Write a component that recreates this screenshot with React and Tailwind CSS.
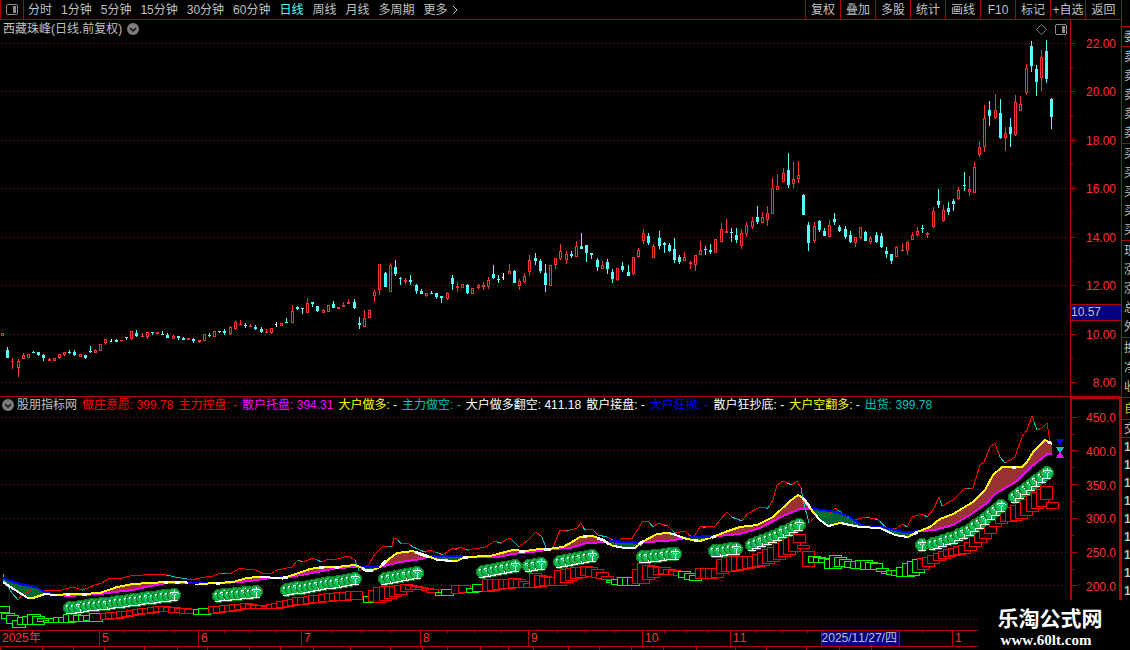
import { Fragment } from "react";

const PERIODS = [
  "分时",
  "1分钟",
  "5分钟",
  "15分钟",
  "30分钟",
  "60分钟",
  "日线",
  "周线",
  "月线",
  "多周期",
  "更多",
];

const TOOLS = ["复权", "叠加", "多股", "统计", "画线", "F10", "标记", "+自选", "返回"];

const PRICE_TICKS = ["22.00", "20.00", "18.00", "16.00", "14.00", "12.00", "10.00", "8.00"];
const PRICE_GRID = [43, 91, 140, 188, 237, 285, 334, 382];

const IND_TICKS = ["450.0", "400.0", "350.0", "300.0", "250.0", "200.0"];
const IND_GRID = [417, 450, 484, 518, 552, 585, 619];

const LEGEND = [
  { text: "做庄意愿: 399.78", color: "text-[#ff0000]" },
  { text: "主力控盘: -", color: "text-[#ff0000]" },
  { text: "散户托盘: 394.31", color: "text-[#ff00ff]" },
  { text: "大户做多: -", color: "text-[#ffff00]" },
  { text: "主力做空: -", color: "text-[#00c0c0]" },
  { text: "大户做多翻空: 411.18", color: "text-white" },
  { text: "散户接盘: -", color: "text-white" },
  { text: "大户狂抛: -", color: "text-[#0000ff]" },
  { text: "散户狂抄底: -", color: "text-white" },
  { text: "大户空翻多: -", color: "text-[#ffff00]" },
  { text: "出货: 399.78", color: "text-[#00c0c0]" },
];

const MONTHS = [
  { label: "2025年", span: 99 },
  { label: "5", span: 99 },
  { label: "6", span: 103 },
  { label: "7", span: 119 },
  { label: "8", span: 108 },
  { label: "9", span: 114 },
  { label: "10", span: 88 },
  { label: "11", span: 222 },
  { label: "1", span: 169 },
];

const WEEK_TICKS = [
  124, 149, 174, 224, 249, 275, 331, 361, 390, 447, 474, 501, 557, 585, 614, 664, 686, 708, 756, 782,
  807, 922,
];
const FOOT_TICKS = [
  0, 42, 73, 104, 144, 177, 207, 249, 280, 313, 350, 390, 422, 447, 480, 508, 533, 568, 599, 631, 663,
  696, 735, 766, 806, 839, 871,
];

// x, high, body top, body bottom, low, kind (r = up, c = down, w = flat)
const CANDLES = [
  [2, 333, 333, 336, 336, "r"], [7, 347, 350, 358, 358, "c"], [12, 358, 361, 362, 369, "r"],
  [18, 359, 361, 368, 377, "r"], [23, 353, 355, 359, 359, "r"], [28, 354, 354, 358, 358, "r"],
  [33, 351, 352, 353, 353, "c"], [38, 352, 352, 355, 356, "c"], [43, 354, 355, 358, 361, "c"],
  [49, 358, 359, 361, 361, "r"], [54, 358, 358, 361, 361, "r"], [59, 354, 354, 358, 359, "r"],
  [64, 352, 352, 355, 356, "r"], [69, 350, 352, 353, 354, "c"], [74, 350, 352, 355, 356, "c"],
  [80, 354, 354, 357, 357, "r"], [85, 355, 355, 358, 359, "c"], [90, 346, 351, 352, 353, "c"],
  [95, 349, 350, 353, 353, "r"], [100, 344, 344, 351, 351, "r"], [105, 339, 339, 343, 345, "r"],
  [111, 339, 341, 342, 342, "w"], [116, 339, 340, 342, 342, "c"], [121, 340, 340, 341, 342, "r"],
  [126, 337, 337, 338, 340, "c"], [131, 331, 331, 339, 340, "r"], [136, 330, 333, 336, 337, "c"],
  [142, 333, 336, 337, 337, "r"], [147, 332, 332, 337, 339, "r"], [152, 332, 332, 333, 335, "c"],
  [157, 332, 332, 334, 334, "r"], [162, 331, 334, 335, 335, "c"], [167, 333, 335, 338, 338, "c"],
  [173, 335, 336, 339, 339, "r"], [178, 336, 336, 338, 340, "c"], [183, 337, 338, 340, 340, "c"],
  [188, 338, 338, 340, 340, "r"], [193, 338, 339, 341, 343, "c"], [199, 340, 340, 342, 343, "r"],
  [204, 334, 334, 341, 341, "r"], [209, 333, 335, 336, 337, "c"], [214, 331, 331, 337, 337, "r"],
  [219, 331, 331, 332, 333, "c"], [224, 329, 331, 333, 335, "c"], [230, 326, 327, 334, 335, "r"],
  [235, 321, 322, 329, 330, "r"], [240, 320, 324, 325, 325, "r"], [245, 323, 325, 326, 328, "c"],
  [250, 324, 326, 327, 327, "r"], [255, 325, 327, 329, 330, "c"], [261, 327, 329, 332, 333, "c"],
  [266, 329, 332, 333, 333, "r"], [271, 328, 328, 333, 334, "r"], [276, 322, 324, 325, 327, "w"],
  [281, 323, 323, 326, 326, "r"], [286, 318, 322, 323, 323, "c"], [292, 305, 311, 323, 323, "r"],
  [297, 306, 307, 309, 310, "c"], [302, 308, 308, 309, 314, "c"], [307, 298, 303, 313, 313, "r"],
  [312, 302, 302, 304, 307, "c"], [317, 306, 306, 311, 312, "c"], [323, 309, 310, 313, 313, "r"],
  [328, 305, 305, 312, 312, "r"], [333, 301, 304, 308, 308, "c"], [338, 307, 307, 309, 309, "r"],
  [343, 302, 305, 307, 307, "r"], [348, 299, 302, 304, 304, "r"], [354, 299, 302, 308, 309, "c"],
  [359, 317, 323, 325, 329, "c"], [364, 310, 318, 327, 327, "r"], [369, 310, 310, 318, 318, "r"],
  [374, 290, 292, 296, 302, "r"], [379, 264, 264, 290, 295, "r"], [385, 272, 273, 287, 287, "c"],
  [390, 263, 265, 292, 292, "r"], [395, 260, 267, 274, 276, "c"], [400, 277, 278, 279, 285, "c"],
  [405, 278, 280, 282, 284, "r"], [410, 275, 280, 282, 285, "c"], [416, 284, 285, 291, 294, "c"],
  [421, 289, 291, 294, 294, "c"], [426, 293, 293, 296, 297, "r"], [431, 291, 293, 294, 294, "c"],
  [436, 293, 293, 297, 299, "c"], [441, 296, 296, 298, 303, "c"], [447, 292, 293, 299, 300, "r"],
  [452, 275, 278, 284, 290, "c"], [457, 282, 286, 288, 292, "r"], [462, 284, 284, 288, 288, "r"],
  [467, 284, 285, 293, 294, "c"], [472, 288, 288, 294, 294, "r"], [478, 284, 285, 288, 289, "r"],
  [483, 282, 285, 287, 290, "r"], [488, 277, 280, 287, 289, "r"], [493, 265, 274, 278, 279, "c"],
  [498, 275, 279, 280, 283, "c"], [503, 273, 277, 278, 280, "w"], [509, 264, 271, 274, 274, "r"],
  [514, 270, 271, 283, 283, "c"], [519, 279, 281, 286, 290, "r"], [524, 273, 276, 282, 283, "r"],
  [529, 255, 260, 272, 276, "r"], [535, 253, 258, 261, 265, "c"], [540, 259, 261, 271, 273, "c"],
  [545, 264, 273, 285, 292, "c"], [550, 265, 265, 286, 286, "r"], [555, 258, 258, 265, 269, "r"],
  [560, 244, 251, 259, 260, "r"], [566, 251, 254, 260, 264, "r"], [571, 251, 254, 256, 258, "c"],
  [576, 241, 246, 257, 257, "r"], [581, 233, 246, 249, 249, "c"], [586, 245, 245, 253, 262, "c"],
  [591, 253, 253, 255, 259, "c"], [597, 258, 260, 267, 271, "c"], [602, 261, 265, 269, 269, "r"],
  [607, 259, 262, 269, 274, "c"], [612, 269, 272, 279, 283, "c"], [617, 268, 268, 280, 281, "r"],
  [622, 262, 266, 270, 272, "c"], [628, 265, 272, 276, 276, "c"], [633, 257, 257, 274, 275, "r"],
  [638, 248, 250, 257, 258, "r"], [643, 229, 233, 241, 244, "r"], [648, 233, 236, 243, 245, "c"],
  [653, 244, 246, 258, 258, "r"], [659, 231, 238, 246, 249, "c"], [664, 242, 243, 245, 253, "c"],
  [669, 243, 245, 251, 252, "c"], [674, 238, 249, 260, 263, "c"], [679, 255, 257, 262, 264, "c"],
  [684, 252, 257, 261, 261, "r"], [690, 261, 262, 264, 269, "r"], [695, 255, 255, 265, 271, "r"],
  [700, 241, 250, 255, 255, "r"], [705, 246, 249, 250, 255, "c"], [710, 244, 250, 252, 254, "c"],
  [715, 239, 239, 253, 253, "r"], [721, 223, 229, 242, 242, "r"], [726, 219, 231, 233, 233, "r"],
  [731, 228, 232, 233, 242, "c"], [736, 228, 235, 240, 243, "c"], [741, 229, 233, 246, 249, "r"],
  [746, 222, 225, 234, 237, "r"], [752, 217, 221, 227, 229, "r"], [757, 206, 217, 222, 224, "c"],
  [762, 212, 217, 223, 223, "r"], [767, 206, 213, 220, 226, "r"], [772, 178, 188, 214, 214, "r"],
  [777, 174, 186, 190, 190, "r"], [783, 168, 173, 182, 182, "r"], [788, 153, 170, 185, 188, "c"],
  [793, 162, 179, 184, 189, "r"], [798, 161, 175, 179, 183, "r"], [803, 194, 195, 215, 215, "c"],
  [808, 222, 225, 243, 251, "c"], [814, 222, 226, 241, 243, "r"], [819, 220, 221, 230, 232, "c"],
  [824, 228, 231, 236, 236, "c"], [829, 220, 225, 237, 237, "r"], [834, 213, 219, 222, 225, "c"],
  [839, 225, 227, 231, 232, "c"], [845, 226, 229, 237, 239, "c"], [850, 231, 235, 242, 243, "c"],
  [855, 237, 237, 243, 247, "r"], [860, 227, 227, 238, 239, "r"], [865, 231, 232, 241, 241, "c"],
  [870, 236, 238, 242, 244, "r"], [876, 232, 235, 242, 243, "c"], [881, 233, 236, 247, 248, "c"],
  [886, 247, 251, 254, 258, "c"], [891, 254, 254, 261, 264, "c"], [896, 246, 247, 257, 257, "r"],
  [902, 243, 250, 251, 251, "r"], [907, 241, 242, 251, 255, "r"], [912, 232, 235, 240, 240, "r"],
  [917, 227, 231, 235, 236, "r"], [922, 225, 228, 229, 233, "c"], [927, 232, 233, 235, 238, "r"],
  [933, 207, 211, 227, 228, "r"], [938, 189, 201, 205, 208, "c"], [943, 205, 210, 221, 222, "r"],
  [948, 202, 208, 212, 215, "c"], [953, 199, 201, 204, 211, "c"], [958, 187, 190, 199, 200, "r"],
  [964, 172, 185, 186, 191, "c"], [969, 176, 189, 192, 196, "r"], [974, 162, 167, 193, 193, "r"],
  [979, 141, 147, 155, 157, "r"], [984, 105, 118, 147, 152, "r"], [989, 101, 110, 116, 126, "c"],
  [995, 94, 110, 118, 119, "r"], [1000, 99, 113, 138, 139, "c"], [1005, 127, 133, 138, 151, "r"],
  [1010, 118, 127, 134, 147, "c"], [1015, 95, 102, 135, 136, "r"], [1020, 96, 104, 111, 111, "r"],
  [1026, 64, 68, 93, 95, "r"], [1031, 41, 46, 66, 72, "c"], [1036, 65, 69, 82, 96, "c"],
  [1041, 50, 57, 78, 91, "r"], [1046, 40, 51, 79, 83, "c"], [1051, 98, 99, 117, 129, "c"],
];

const CANDLE_COLORS = { r: "#ff3232", c: "#54ffff", w: "#ffffff" };

const WISH = [
  [3, 574], [5, 582], [12, 593], [18, 600], [22, 595], [33, 589], [50, 591], [62, 590], [72, 587],
  [83, 590], [95, 585], [102, 583], [110, 578], [120, 579], [133, 575], [143, 575], [152, 574],
  [167, 575], [175, 577], [187, 579], [193, 580], [200, 578], [213, 576], [220, 573], [230, 574],
  [240, 568], [245, 569], [253, 569], [262, 573], [272, 573], [277, 570], [292, 567], [298, 560],
  [303, 562], [313, 558], [322, 562], [328, 559], [337, 559], [348, 556], [355, 560], [359, 571],
  [367, 567], [375, 554], [383, 546], [387, 546], [392, 547], [394, 538], [396, 538], [401, 544],
  [408, 543], [413, 547], [425, 552], [430, 550], [443, 555], [452, 548], [457, 549], [460, 547],
  [467, 550], [480, 548], [485, 547], [495, 541], [500, 543], [510, 538], [519, 547], [527, 541],
  [536, 532], [542, 537], [546, 548], [552, 550], [560, 530], [567, 531], [577, 528], [581, 523],
  [585, 530], [592, 529], [598, 535], [607, 537], [617, 542], [623, 538], [632, 539], [642, 522],
  [648, 521], [653, 527], [658, 523], [668, 526], [675, 533], [685, 531], [693, 538], [700, 527],
  [715, 526], [727, 512], [732, 517], [742, 521], [747, 514], [760, 507], [768, 508], [773, 500],
  [777, 485], [783, 481], [792, 485], [797, 481], [801, 488], [803, 500], [809, 523], [817, 515],
  [827, 515], [835, 508], [847, 517], [857, 520], [863, 517], [877, 519], [887, 528], [897, 528],
  [902, 524], [907, 527], [912, 517], [922, 514], [927, 517], [933, 510], [939, 497], [942, 506],
  [953, 500], [965, 488], [973, 488], [980, 465], [984, 462], [990, 447], [995, 443], [1000, 457],
  [1005, 463], [1015, 457], [1022, 437], [1027, 430], [1032, 416], [1037, 430], [1042, 428],
  [1047, 423], [1050, 442],
];

const WISH_WEAK = [
  [3, 18], [82, 85], [166, 187], [222, 226], [298, 302], [317, 322], [355, 359], [388, 392],
  [398, 401], [410, 425], [436, 443], [455, 458], [465, 468], [497, 501], [512, 519], [540, 552],
  [566, 569], [583, 586], [594, 608], [611, 617], [650, 654], [664, 667], [672, 676], [690, 694],
  [703, 706], [731, 742], [766, 769], [787, 792], [801, 809], [838, 850], [866, 869], [875, 887],
  [904, 907], [924, 928], [940, 943], [967, 970], [999, 1006], [1034, 1037],
];

const SHORT = [
  [3, 582], [15, 590], [28, 598], [33, 598], [45, 594], [55, 595], [72, 594], [83, 594], [100, 593],
  [117, 587], [133, 584], [150, 583], [167, 582], [180, 582], [190, 583], [200, 584], [217, 583],
  [233, 582], [247, 578], [257, 577], [267, 577], [273, 578], [283, 578], [293, 575], [310, 569],
  [322, 567], [337, 567], [355, 565], [360, 567], [365, 570], [373, 570], [380, 567], [384, 563],
  [397, 553], [405, 552], [413, 551], [418, 553], [430, 557], [438, 560], [457, 561], [465, 557],
  [490, 556], [513, 550], [525, 551], [540, 549], [548, 549], [563, 547], [572, 542], [580, 537],
  [593, 536], [603, 540], [613, 546], [625, 548], [635, 548], [642, 542], [657, 534], [667, 533],
  [673, 534], [687, 539], [700, 541], [713, 537], [725, 532], [740, 527], [757, 525], [773, 517],
  [790, 501], [798, 495], [803, 498], [809, 506], [813, 512], [820, 520], [828, 526], [840, 523],
  [860, 527], [880, 528], [895, 535], [908, 537], [917, 532], [930, 527], [940, 519], [953, 514],
  [973, 502], [985, 490], [993, 475], [1002, 467], [1013, 467], [1022, 467], [1027, 462],
  [1033, 452], [1045, 440], [1051, 443],
];

const LONG = [
  [3, 578], [8, 580], [20, 584], [35, 587], [45, 592], [57, 595], [70, 596], [83, 595], [100, 594],
  [115, 592], [133, 590], [150, 586], [167, 583], [190, 583], [225, 583], [250, 581], [270, 578],
  [290, 577], [317, 572], [337, 568], [355, 567], [380, 567], [400, 562], [422, 559], [430, 556],
  [458, 556], [468, 557], [497, 557], [513, 554], [540, 551], [553, 549], [570, 548], [587, 543],
  [607, 542], [612, 541], [627, 542], [638, 543], [643, 542], [667, 541], [687, 538], [693, 537],
  [710, 536], [717, 536], [740, 534], [760, 528], [783, 516], [800, 509], [815, 509], [837, 512],
  [850, 517], [863, 526], [883, 527], [903, 532], [913, 532], [917, 531], [935, 530], [953, 525],
  [973, 513], [987, 503], [995, 494], [1017, 481], [1030, 468], [1047, 454], [1052, 454],
];

// parts of the short line that are drawn white, the rest stays yellow
const SHORT_WHITE = [
  [3, 29], [42, 57], [66, 70], [82, 87], [164, 168], [175, 180], [184, 200], [216, 220], [260, 280],
  [282, 288], [319, 324], [335, 339], [362, 373], [382, 386], [415, 429], [434, 452], [463, 468],
  [519, 525], [544, 551], [583, 587], [597, 609], [614, 635], [639, 644], [669, 686], [694, 698],
  [712, 716], [803, 810], [815, 833], [841, 907], [914, 918], [1012, 1016], [1048, 1052],
];

// left, top, right, bottom
const GREEN_BOXES = [
  [-4, 606, 9, 612], [1, 613, 14, 618], [6, 615, 18, 623], [12, 620, 25, 627], [17, 617, 29, 624],
  [22, 616, 34, 624], [27, 614, 40, 624], [32, 616, 44, 624], [37, 618, 49, 621], [43, 620, 55, 622],
  [48, 618, 60, 622], [53, 617, 65, 622], [58, 617, 70, 622], [63, 614, 75, 622], [68, 614, 80, 621],
  [73, 615, 85, 621], [78, 615, 91, 621], [83, 615, 96, 620], [89, 613, 102, 621],
];

// [left, top, bottom] keys, boxes between two keys are interpolated
const BOX_RUNS = [
  ["#ff0000", 100, 184, [[100, 613, 619], [117, 611, 617], [133, 609, 614], [145, 607, 612], [157, 606, 611], [184, 609, 613]]],
  ["#00ff00", 193, 198, [[193, 609, 614], [198, 608, 614]]],
  ["#ff0000", 208, 350, [[208, 606, 613], [240, 603, 608], [260, 606, 608], [273, 602, 608], [293, 597, 604], [317, 594, 601], [350, 591, 599]]],
  ["#00ff00", 358, 363, [[358, 602, 602], [363, 596, 602]]],
  ["#ff0000", 368, 426, [[368, 590, 601], [374, 586, 602], [388, 586, 597], [403, 584, 589], [417, 588, 589], [426, 589, 592]]],
  ["#00ff00", 435, 441, [[435, 592, 595], [441, 589, 595]]],
  ["#ff0000", 451, 458, [[451, 585, 593], [458, 585, 592]]],
  ["#00ff00", 466, 472, [[466, 588, 592], [472, 584, 591]]],
  ["#ff0000", 482, 601, [[482, 579, 591], [497, 579, 588], [510, 578, 587], [523, 583, 587], [528, 573, 587], [541, 577, 585], [549, 577, 585], [554, 570, 585], [562, 568, 581], [580, 566, 575], [592, 569, 577], [601, 576, 579]]],
  ["#00ff00", 606, 627, [[606, 580, 582], [612, 579, 584], [617, 577, 585], [627, 577, 585]]],
  ["#ff0000", 632, 673, [[632, 569, 583], [638, 562, 583], [643, 566, 578], [657, 567, 573], [673, 571, 575]]],
  ["#00ff00", 678, 689, [[678, 571, 577], [689, 575, 580]]],
  ["#ff0000", 695, 788, [[695, 568, 578], [705, 568, 578], [711, 568, 577], [717, 557, 572], [732, 556, 570], [747, 556, 567], [763, 549, 563], [777, 541, 557], [788, 534, 551]]],
  ["#ff0000", 793, 793, [[793, 534, 542]]],
  ["#ff0000", 797, 797, [[797, 545, 548]]],
  ["#ff0000", 802, 802, [[802, 551, 566]]],
  ["#00ff00", 808, 912, [[808, 556, 562], [818, 558, 562], [823, 560, 568], [828, 554, 568], [834, 557, 566], [845, 561, 567], [859, 560, 569], [870, 563, 569], [880, 571, 573], [891, 570, 575], [898, 566, 576], [904, 562, 576], [912, 559, 572]]],
  ["#ff0000", 917, 1036, [[917, 558, 569], [927, 555, 563], [940, 550, 557], [957, 545, 553], [965, 541, 549], [973, 530, 543], [983, 523, 534], [990, 512, 525], [998, 510, 521], [1009, 506, 521], [1020, 499, 515], [1030, 493, 508], [1036, 489, 506]]],
  ["#ff0000", 1040, 1040, [[1040, 486, 499]]],
  ["#ff0000", 1046, 1046, [[1046, 502, 508]]],
];

const BALL_RUNS = [
  [70, 80, [[70, 608], [80, 607]]],
  [87, 174, [[87, 606], [120, 602], [150, 598], [174, 595]]],
  [219, 256, [[219, 596], [256, 592]]],
  [287, 355, [[287, 590], [320, 585], [355, 579]]],
  [385, 417, [[385, 579], [417, 573]]],
  [483, 515, [[483, 572], [515, 566]]],
  [529, 541, [[529, 566], [541, 564]]],
  [560, 592, [[560, 562], [592, 556]]],
  [643, 675, [[643, 557], [675, 554]]],
  [715, 736, [[715, 551], [736, 549]]],
  [752, 799, [[752, 545], [775, 536], [799, 525]]],
  [922, 922, [[922, 545]]],
  [933, 1001, [[933, 544], [953, 538], [973, 528], [1001, 506]]],
  [1015, 1047, [[1015, 497], [1047, 473]]],
];

const BAR = 31 / 6;

function valueAt(points, x, col = 1) {
  if (x <= points[0][0]) return points[0][col];
  for (let i = 1; i < points.length; i++) {
    const a = points[i - 1];
    const b = points[i];
    if (x <= b[0]) return a[col] + ((b[col] - a[col]) * (x - a[0])) / (b[0] - a[0]);
  }
  return points[points.length - 1][col];
}

function pathOf(points, from, to) {
  const inner = points.filter((p) => p[0] > from && p[0] < to);
  const all = [[from, valueAt(points, from)], ...inner.map((p) => [p[0], p[1]]), [to, valueAt(points, to)]];
  return "M" + all.map((p) => p[0] + " " + Math.round(p[1])).join("L");
}

function steps(from, to) {
  const n = Math.round((to - from) / BAR);
  return Array.from({ length: n + 1 }, (_, i) => (n ? Math.round(from + ((to - from) * i) / n) : from));
}

function Grid({ rows }) {
  return rows.map((y) => (
    <line key={y} x1="1" x2="1067" y1={y + 0.5} y2={y + 0.5} stroke="#a80c0c" strokeDasharray="1 3" />
  ));
}

function PriceChart() {
  return (
    <svg
      className="block h-[376px] w-full"
      viewBox="0 20 1070 376"
      preserveAspectRatio="none"
      shapeRendering="crispEdges"
      role="img"
      aria-label="西藏珠峰 日线"
    >
      <Grid rows={PRICE_GRID} />
      {CANDLES.map(([x, high, top, bottom, low, kind]) => (
        <g key={x} fill={CANDLE_COLORS[kind]}>
          <rect x={x} y={high} width="1" height={low - high} />
          <rect x={x - 1} y={top} width={kind === "w" ? 2 : 3} height={bottom - top} />
          {kind === "r" && bottom - top > 2 && (
            <rect x={x} y={top + 1} width="1" height={bottom - top - 2} fill="#000" />
          )}
        </g>
      ))}
    </svg>
  );
}

function Bands() {
  const cols = [];
  for (let x = 3; x <= 1051; x++) {
    const s = Math.round(valueAt(SHORT, x));
    const l = Math.round(valueAt(LONG, x));
    if (s === l) continue;
    cols.push(
      <rect key={x} x={x} y={Math.min(s, l)} width="1" height={Math.abs(s - l)} fill={s < l ? "#993333" : "#006633"} />
    );
  }
  return cols;
}

function LongLine() {
  const runs = [];
  let start = 3;
  const above = (x) => valueAt(SHORT, x) <= valueAt(LONG, x);
  for (let x = 4; x <= 1052; x++) {
    if (x === 1052 || above(x) !== above(start)) {
      runs.push([start, x, above(start)]);
      start = x;
    }
  }
  return runs.map(([a, b, up]) => (
    <path key={a} d={pathOf(LONG, a, b)} stroke={up ? "#ff00ff" : "#0000ff"} strokeWidth="2" fill="none" />
  ));
}

function Ball({ x, y }) {
  return (
    <g transform={`translate(${x} ${y})`}>
      <circle r="7" fill="#0f7a1c" />
      <circle r="6" fill="url(#ball)" />
      <path
        d="M0 -5V-3M-4 -1V-2L-2 -3H2L4 -2V-1M-2 0L-1 -1M2 0L1 -1M0 0V5M-4 5H4"
        stroke="#fff"
        strokeWidth="1"
        fill="none"
      />
    </g>
  );
}

function IndicatorChart() {
  return (
    <svg
      className="block h-[217px] w-full"
      viewBox="0 413 1070 217"
      preserveAspectRatio="none"
      shapeRendering="crispEdges"
      role="img"
      aria-label="股朋指标网"
    >
      <defs>
        <radialGradient id="ball" cx="0.5" cy="0.45" r="0.55">
          <stop offset="0" stopColor="#10d870" />
          <stop offset="0.7" stopColor="#10b858" />
          <stop offset="1" stopColor="#1e9a30" />
        </radialGradient>
      </defs>
      <Grid rows={IND_GRID} />
      <Bands />
      <path d={pathOf(WISH, 3, 1050)} stroke="#ff0000" fill="none" />
      {WISH_WEAK.map(([a, b]) => (
        <path key={a} d={pathOf(WISH, a, b)} stroke="#00c0c0" fill="none" />
      ))}
      <LongLine />
      <path d={pathOf(SHORT, 28, 1050)} stroke="#ffff00" strokeWidth="2" fill="none" />
      {SHORT_WHITE.map(([a, b]) => (
        <path
          key={a}
          d={pathOf(SHORT, a, b)}
          stroke="#fff"
          strokeWidth={b - a > 14 ? 2 : 3}
          fill="none"
        />
      ))}
      <path d="M188 583H199M368 567H379M440 556H458M615 542H636M697 537H710" stroke="#0000ff" strokeWidth="2" />
      <g fill="#000" transform="translate(0.5 0.5)">
        {GREEN_BOXES.map(([l, t, r, b]) => (
          <rect key={l} x={l} y={t} width={r - l} height={b - t} stroke="#00ff00" />
        ))}
        {BOX_RUNS.map(([color, from, to, keys]) => (
          <Fragment key={from}>
            {steps(from, to).map((x) => {
              const top = Math.round(valueAt(keys, x, 1));
              const bottom = Math.round(valueAt(keys, x, 2));
              return <rect key={x} x={x} y={top} width="12" height={bottom - top} stroke={color} />;
            })}
          </Fragment>
        ))}
      </g>
      {BALL_RUNS.map(([from, to, keys]) => (
        <Fragment key={from}>
          {steps(from, to).map((x) => (
            <Ball key={x} x={x} y={Math.round(valueAt(keys, x))} />
          ))}
        </Fragment>
      ))}
      <path d="M1056 439H1064L1060 446Z" fill="#0000ff" />
      <path d="M1056 447H1064L1060 454Z" fill="#00c0c0" />
      <path d="M1056 458H1064L1060 451Z" fill="#ff00ff" />
    </svg>
  );
}

function AxisTicks({ rows, top, height, className }) {
  return (
    <svg className={className} viewBox={`0 ${top} 5 ${height}`} shapeRendering="crispEdges" aria-hidden="true">
      {rows.map((y, i) => (
        <g key={y} fill="#b00000">
          <rect x="0" y={y} width="5" height="1" />
          {i < rows.length - 1 && <rect x="0" y={Math.round((y + rows[i + 1]) / 2)} width="2" height="1" />}
        </g>
      ))}
    </svg>
  );
}

function PanelIcon() {
  return (
    <svg width="12" height="11" viewBox="0 0 12 11" shapeRendering="crispEdges" aria-hidden="true">
      <path d="M1 0H11V1H12V10H11V11H1V10H0V1H1ZM1 1V10H11V1Z" fill="#8c8c8c" fillRule="evenodd" />
      <rect x="7" y="2" width="3" height="7" fill="#8c8c8c" />
    </svg>
  );
}

function ChevronBadge() {
  return (
    <svg width="12" height="12" viewBox="0 0 12 12" aria-hidden="true">
      <circle cx="6" cy="6" r="6" fill="#7c7c7c" />
      <path d="M3 5L6 8L9 5" stroke="#101010" strokeWidth="1.5" fill="none" />
    </svg>
  );
}

function Header() {
  return (
    <header className="flex h-5 justify-between border-b border-[#b00000]">
      <nav className="flex items-center">
        <button aria-label="侧栏" className="grid h-full w-6 place-content-center border-x border-[#b00000]">
          <PanelIcon />
        </button>
        <div className="flex items-center gap-[9px] pl-1">
          {PERIODS.map((p) => (
            <button key={p} className={p === "日线" ? "text-[#54ffff]" : "text-[#c0c0c0]"}>
              {p}
            </button>
          ))}
        </div>
        <svg className="ml-1" width="6" height="10" viewBox="0 0 6 10" aria-hidden="true">
          <path d="M1 1L5 5L1 9" stroke="#c0c0c0" fill="none" />
        </svg>
      </nav>
      <nav className="flex">
        {TOOLS.map((t, i) => (
          <button
            key={t}
            className={
              "border-l border-[#b00000] whitespace-nowrap text-[#c0c0c0] " +
              (i === TOOLS.length - 1 ? "w-9" : "w-[35px]")
            }
          >
            {t}
          </button>
        ))}
      </nav>
    </header>
  );
}

function QuoteGroup({ items, className }) {
  return (
    <div className={"flex flex-col border-t border-[#b00000] pl-0.5 " + className}>
      {items.map((t, i) => (
        <span key={i} className="flex flex-1 items-center leading-none whitespace-nowrap">
          {t}
        </span>
      ))}
    </div>
  );
}

function QuoteStrip() {
  return (
    <aside className="w-[9px] shrink-0 overflow-hidden border-l border-[#b00000] pt-[26px] text-[#c0c0c0]">
      <QuoteGroup items={["委"]} className="h-5" />
      <QuoteGroup items={["卖", "卖", "卖", "卖", "卖"]} className="h-[97px]" />
      <QuoteGroup items={["买", "买", "买", "买", "买"]} className="h-[97px]" />
      <QuoteGroup items={["现", "涨", "涨", "总", "外"]} className="h-[97px]" />
      <QuoteGroup items={["换", "净", "收"]} className="h-[60px]" />
      <QuoteGroup items={["自"]} className="h-[22px] text-[#c8c800]" />
      <QuoteGroup items={["交"]} className="h-[18px]" />
      <QuoteGroup items={["1", "1", "1", "1", "1", "1", "1", "1", "1"]} className="h-[163px] font-bold" />
    </aside>
  );
}

function TickRow({ ticks, className }) {
  return (
    <svg
      className={className}
      viewBox="0 0 1121 3"
      preserveAspectRatio="none"
      shapeRendering="crispEdges"
      aria-hidden="true"
    >
      {ticks.map((x) => (
        <rect key={x} x={x} y="0" width="1" height="3" fill="#b00000" />
      ))}
    </svg>
  );
}

function TimeAxis() {
  return (
    <div>
      <div className="relative flex h-[17px] border-y border-[#b00000] text-[#ff3232]">
        {MONTHS.map((m, i) => (
          <div
            key={m.label}
            className={
              "overflow-hidden pl-0.5 leading-[15px] whitespace-nowrap " + (i ? "border-l border-[#b00000]" : "")
            }
            style={{ width: `${(m.span / 1121) * 100}%` }}
          >
            {m.label}
          </div>
        ))}
        <TickRow ticks={WEEK_TICKS} className="absolute inset-x-0 top-0 h-0.5 w-full" />
        <span className="absolute inset-y-0 left-[73.2%] border-x border-[#b00000] bg-[#000080] pr-0.5 leading-[15px] text-[#c0c0c0]">
          2025/11/27/四
        </span>
      </div>
      <TickRow ticks={FOOT_TICKS} className="block h-[3px] w-full" />
    </div>
  );
}

export default function App() {
  return (
    <div className="relative flex min-h-screen overflow-hidden bg-black font-['Liberation_Sans','Noto_Sans_CJK_SC',sans-serif] text-xs [font-kerning:none]">
      <main className="min-w-0 flex-1">
        <Header />

        <section className="flex border-b border-[#b00000]">
          <div className="relative min-w-0 flex-1">
            <PriceChart />
            <div className="absolute inset-x-0 top-0 flex h-[18px] items-center justify-between pr-[3px] pl-[3px] text-[#c0c0c0]">
              <h1 className="flex items-center gap-[5px]">
                西藏珠峰(日线.前复权)
                <ChevronBadge />
              </h1>
              <div className="flex items-center gap-2">
                <svg width="11" height="11" viewBox="0 0 11 11" aria-hidden="true">
                  <path d="M5.5 .5L10.5 5.5L5.5 10.5L.5 5.5Z" stroke="#777" fill="none" />
                </svg>
                <PanelIcon />
              </div>
            </div>
          </div>
          <div className="relative flex w-[51px] shrink-0 justify-between border-l border-[#b00000] text-[#ff3232]">
            <AxisTicks rows={PRICE_GRID} top={20} height={376} className="h-[376px] w-[5px]" />
            <div className="flex flex-col justify-between pt-4 pr-[5px] pb-[5px] text-right leading-4">
              {PRICE_TICKS.map((t) => (
                <span key={t}>{t}</span>
              ))}
            </div>
            <span className="absolute inset-x-0 top-[284px] border-y border-[#b00000] bg-[#000080] leading-[15px] text-[#c0c0c0]">
              10.57
            </span>
          </div>
        </section>

        <section className="flex">
          <div className="min-w-0 flex-1">
            <div className="flex h-4 items-center gap-[5px] pl-0.5 whitespace-nowrap">
              <h2 className="flex items-center gap-[3px] text-[#c0c0c0]">
                <ChevronBadge />
                股朋指标网
              </h2>
              {LEGEND.map((l) => (
                <span key={l.text} className={l.color}>
                  {l.text}
                </span>
              ))}
            </div>
            <IndicatorChart />
          </div>
          <div className="flex w-[51px] shrink-0 justify-between border-x-2 border-t-2 border-[#b00000] text-[#ff3232]">
            <AxisTicks rows={IND_GRID} top={399} height={231} className="h-[231px] w-[5px]" />
            <div className="flex h-[196px] flex-col justify-between pt-[11px] pr-[3px] text-right leading-4">
              {IND_TICKS.map((t) => (
                <span key={t}>{t}</span>
              ))}
            </div>
          </div>
        </section>

        <TimeAxis />
      </main>

      <QuoteStrip />

      <a
        href="#"
        className="absolute right-0 bottom-0 flex h-[50px] w-[152px] flex-col items-center bg-black pr-2 font-bold text-white"
      >
        <span className="pt-[5px] text-[21px] leading-7">乐淘公式网</span>
        <span className="mr-2 font-['Liberation_Serif',serif] text-[15px] leading-[15px]">www.60lt.com</span>
      </a>
    </div>
  );
}
